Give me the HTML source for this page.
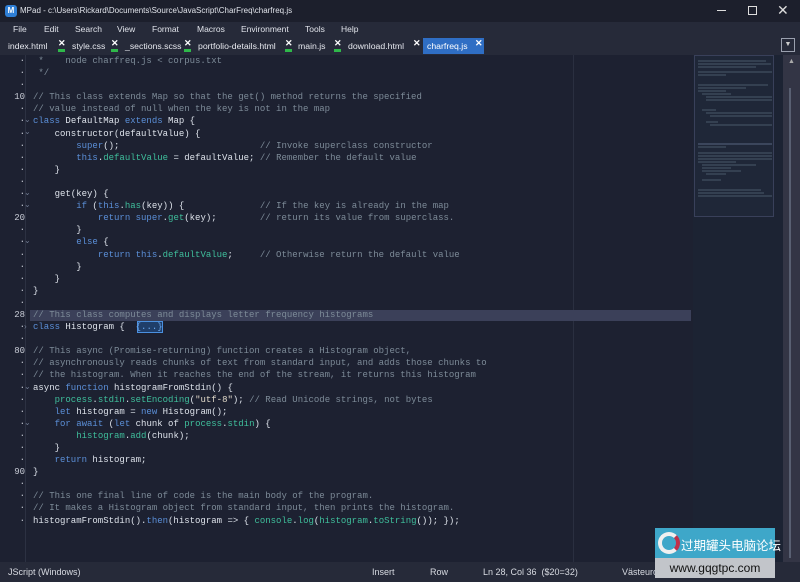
<!DOCTYPE html>
<html><head><meta charset="utf-8"><style>
*{margin:0;padding:0;box-sizing:border-box}
body{width:800px;height:582px;overflow:hidden;background:#1d2131;font-family:"Liberation Sans",sans-serif;position:relative;color:#d8dde6}
.abs{position:absolute}
#title{left:0;top:0;width:800px;height:22px;background:#1c1f2c;font-size:8px;color:#e0e3ea}
#menu{left:0;top:22px;width:800px;height:15px;background:#262a39;font-size:8.5px;color:#e0e3ea}
#menu span{position:absolute;top:2px}
#tabs{left:0;top:37px;width:800px;height:18px;background:#262a39;font-size:8.7px;color:#e6e8ee}
#tabs .t{position:absolute;top:4px}
#tabs .x{position:absolute;top:1px;font-size:9px;font-weight:bold;color:#fff}
#tabs .g{position:absolute;top:12px;width:7px;height:3px;background:#2fb84a}
#code{left:33px;top:55px;font-family:"Liberation Mono",monospace;font-size:9px;line-height:12.1px;white-space:pre;color:#dde2ea}
#gut{left:0;top:55px;width:25px;font-family:"Liberation Mono",monospace;font-size:9px;line-height:12.1px;text-align:right;color:#c8ccd6;white-space:pre}
.f{position:absolute;left:24px;font-size:8px;color:#6f7a90;line-height:12px}
.c{color:#7d8b98}.k{color:#5b8fd8}.g{color:#3fbf9c}.s{color:#e0d8c8}
#status{left:0;top:562px;width:800px;height:20px;background:#262a39;font-size:9px;color:#d8dbe2}
#status span{position:absolute;top:5px}
</style></head><body>
<div id="title" class="abs">
 <div class="abs" style="left:5px;top:5px;width:12px;height:12px;border-radius:3px;background:#2f7fd6;font-size:8px;color:#fff;text-align:center;line-height:12px;font-weight:bold">M</div>
 <div class="abs" style="left:20px;top:6px">MPad - c:\Users\Rickard\Documents\Source\JavaScript\CharFreq\charfreq.js</div>
 <div class="abs" style="left:717px;top:10px;width:9px;height:1px;background:#ddd"></div>
 <div class="abs" style="left:748px;top:6px;width:9px;height:9px;border:1px solid #ddd"></div>
 <div class="abs" style="left:777px;top:2px;font-size:14px;color:#ddd">✕</div>
</div>
<div id="menu" class="abs">
 <span style="left:13px">File</span><span style="left:44px">Edit</span><span style="left:75px">Search</span><span style="left:117px">View</span><span style="left:152px">Format</span><span style="left:197px">Macros</span><span style="left:241px">Environment</span><span style="left:305px">Tools</span><span style="left:341px">Help</span>
</div>
<div id="tabs" class="abs">
 <span class="t" style="left:8px">index.html</span><span class="x" style="left:58px">✕</span><span class="g" style="left:58px"></span>
 <span class="t" style="left:72px">style.css</span><span class="x" style="left:111px">✕</span><span class="g" style="left:111px"></span>
 <span class="t" style="left:125px">_sections.scss</span><span class="x" style="left:184px">✕</span><span class="g" style="left:184px"></span>
 <span class="t" style="left:198px">portfolio-details.html</span><span class="x" style="left:285px">✕</span><span class="g" style="left:285px"></span>
 <span class="t" style="left:298px">main.js</span><span class="x" style="left:334px">✕</span><span class="g" style="left:334px"></span>
 <span class="t" style="left:348px">download.html</span><span class="x" style="left:413px">✕</span>
 <div class="abs" style="left:423px;top:1px;width:61px;height:16px;background:#2f6ec4"></div>
 <span class="t" style="left:427px;color:#fff">charfreq.js</span><span class="x" style="left:475px">✕</span>
 <div class="abs" style="left:781px;top:1px;width:14px;height:14px;border:1px solid #9aa0ae;font-size:7px;text-align:center;line-height:12px;color:#ccc">▼</div>
</div>
<div class="abs" style="left:0;top:55px;width:691px;height:507px;background:#1d2131"></div>
<div class="abs" style="left:25px;top:55px;width:1px;height:507px;background:#2c3142"></div>
<div class="abs" style="left:573px;top:55px;width:1px;height:507px;background:#2a2f40"></div>
<div class="abs" style="left:30px;top:310px;width:661px;height:11px;background:#3b4059"></div>
<div class="abs" style="left:137px;top:321px;width:26px;height:12px;border:1px solid #4a90e0;background:#1f3e6a"></div>
<div class="abs" style="left:693px;top:55px;width:90px;height:507px;background:#1c2333"></div>
<div class="abs" style="left:694px;top:55px;width:80px;height:162px;border:1px solid #39405a;background:#1f2738"></div>
<svg class="abs" style="left:696px;top:58px" width="78" height="156">
 <g stroke="#5d7080" stroke-width="1" opacity="0.7">
 <line x1="2" y1="3" x2="70" y2="3"/><line x1="2" y1="6" x2="75" y2="6"/><line x1="2" y1="9" x2="60" y2="9"/><line x1="2" y1="14" x2="76" y2="14"/><line x1="2" y1="17" x2="30" y2="17"/>
 <line x1="2" y1="27" x2="72" y2="27"/><line x1="2" y1="30" x2="50" y2="30"/><line x1="2" y1="33" x2="30" y2="33"/><line x1="6" y1="36" x2="35" y2="36"/><line x1="10" y1="39" x2="76" y2="39"/><line x1="10" y1="42" x2="76" y2="42"/>
 <line x1="6" y1="52" x2="20" y2="52"/><line x1="10" y1="55" x2="76" y2="55"/><line x1="14" y1="58" x2="76" y2="58"/><line x1="10" y1="64" x2="22" y2="64"/><line x1="14" y1="67" x2="76" y2="67"/>
 <line x1="2" y1="86" x2="76" y2="86" stroke="#7080a0"/><line x1="2" y1="89" x2="30" y2="89"/>
 <line x1="2" y1="95" x2="76" y2="95"/><line x1="2" y1="98" x2="76" y2="98"/><line x1="2" y1="101" x2="76" y2="101"/><line x1="2" y1="104" x2="40" y2="104"/><line x1="6" y1="107" x2="60" y2="107"/><line x1="6" y1="110" x2="35" y2="110"/><line x1="6" y1="113" x2="45" y2="113"/><line x1="10" y1="116" x2="30" y2="116"/><line x1="6" y1="122" x2="25" y2="122"/>
 <line x1="2" y1="132" x2="65" y2="132"/><line x1="2" y1="135" x2="68" y2="135"/><line x1="2" y1="138" x2="76" y2="138"/>
 </g></svg>
<div class="abs" style="left:783px;top:55px;width:17px;height:507px;background:#333545"></div>
<div class="abs" style="left:788px;top:58px;font-size:7px;color:#aaa">▲</div>
<div class="abs" style="left:789px;top:88px;width:2px;height:470px;background:#596072"></div>
<div id="gut" class="abs">·
·
·
10
·
·
·
·
·
·
·
·
·
20
·
·
·
·
·
·
·
28
·
·
80
·
·
·
·
·
·
·
·
·
90
·
·
·
·</div>
<span class="f" style="top:114px">⌄</span>
<span class="f" style="top:126px">⌄</span>
<span class="f" style="top:187px">⌄</span>
<span class="f" style="top:199px">⌄</span>
<span class="f" style="top:235px">⌄</span>
<span class="f" style="top:321px">›</span>
<span class="f" style="top:381px">⌄</span>
<span class="f" style="top:417px">⌄</span>
<div id="code" class="abs"><span class="c"> *    node charfreq.js &lt; corpus.txt
 */</span>

<span class="c">// This class extends Map so that the get() method returns the specified
// value instead of null when the key is not in the map</span>
<span class="k">class</span> DefaultMap <span class="k">extends</span> Map {
    constructor(defaultValue) {
        <span class="k">super</span>();                          <span class="c">// Invoke superclass constructor</span>
        <span class="k">this</span>.<span class="g">defaultValue</span> = defaultValue; <span class="c">// Remember the default value</span>
    }

    get(key) {
        <span class="k">if</span> (<span class="k">this</span>.<span class="g">has</span>(key)) {              <span class="c">// If the key is already in the map</span>
            <span class="k">return</span> <span class="k">super</span>.<span class="g">get</span>(key);        <span class="c">// return its value from superclass.</span>
        }
        <span class="k">else</span> {
            <span class="k">return</span> <span class="k">this</span>.<span class="g">defaultValue</span>;     <span class="c">// Otherwise return the default value</span>
        }
    }
}

<span class="c">// This class computes and displays letter frequency histograms</span>
<span class="k">class</span> Histogram {  <span style="color:#6aa8f0">{...}</span>

<span class="c">// This async (Promise-returning) function creates a Histogram object,
// asynchronously reads chunks of text from standard input, and adds those chunks to
// the histogram. When it reaches the end of the stream, it returns this histogram</span>
async <span class="k">function</span> histogramFromStdin() {
    <span class="g">process</span>.<span class="g">stdin</span>.<span class="g">setEncoding</span>(<span class="s">"utf-8"</span>); <span class="c">// Read Unicode strings, not bytes</span>
    <span class="k">let</span> histogram = <span class="k">new</span> Histogram();
    <span class="k">for</span> <span class="k">await</span> (<span class="k">let</span> chunk of <span class="g">process</span>.<span class="g">stdin</span>) {
        <span class="g">histogram</span>.<span class="g">add</span>(chunk);
    }
    <span class="k">return</span> histogram;
}

<span class="c">// This one final line of code is the main body of the program.
// It makes a Histogram object from standard input, then prints the histogram.</span>
histogramFromStdin().<span class="k">then</span>(histogram =&gt; { <span class="g">console</span>.<span class="g">log</span>(<span class="g">histogram</span>.<span class="g">toString</span>()); });</div>
<div id="status" class="abs">
 <span style="left:8px">JScript (Windows)</span><span style="left:372px">Insert</span><span style="left:430px">Row</span><span style="left:483px">Ln 28, Col 36&nbsp;&nbsp;($20=32)</span><span style="left:622px">Västeuropeisk (Windows)</span>
</div>
<div class="abs" style="left:655px;top:528px;width:120px;height:30px;background:#3ea7c9"></div>
<div class="abs" style="left:658px;top:532px;width:22px;height:22px;border-radius:50%;border:4px solid #f0f0f0;border-right-color:#c0304a"></div>
<div class="abs" style="left:681px;top:535px;font-family:'Liberation Sans','Noto Sans CJK SC',sans-serif;font-size:12.5px;color:#fff;white-space:nowrap">过期罐头电脑论坛</div>
<div class="abs" style="left:655px;top:558px;width:120px;height:20px;background:#c2c5ca;font-size:12px;color:#111;text-align:center;line-height:20px">www.gqgtpc.com</div>
</body></html>
